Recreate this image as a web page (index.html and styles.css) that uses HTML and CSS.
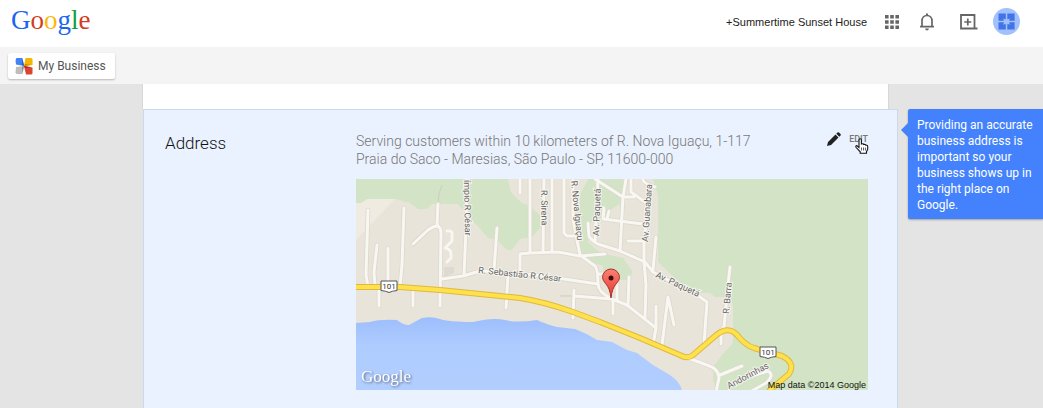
FILE: index.html
```html
<!DOCTYPE html>
<html lang="en">
<head>
    <meta charset="UTF-8">
    <meta name="viewport" content="width=device-width, initial-scale=1.0">
    <title>Google My Business</title>
    <link rel="stylesheet" href="styles.css">
</head>
<body>
    <header class="header">
        <a href="#" class="logo" aria-label="Google"><span class="blue">G</span><span class="red">o</span><span class="yellow">o</span><span class="blue">g</span><span class="green">l</span><span class="red">e</span></a>
        <nav class="tools">
            <a href="#" class="profile">+Summertime Sunset House</a>
            <button class="tool" aria-label="Apps">
                <svg width="14" height="14" viewBox="0 0 14 14" fill="#666"><path d="M0 0h3.600v3.600H0zM5.200 0h3.600v3.600H5.200zM10.400 0H14v3.600h-3.600zM0 5.200h3.600v3.600H0zM5.200 5.200h3.600v3.600H5.200zM10.400 5.200H14v3.600h-3.600zM0 10.400h3.600V14H0zM5.200 10.400h3.600V14H5.200zM10.400 10.400H14V14h-3.600z"/></svg>
            </button>
            <button class="tool" aria-label="Notifications">
                <svg width="16" height="18" viewBox="0 0 16 18"><path d="M3 13V8c0-3 2-5.500 5-5.500S13 5 13 8v5M1 13.700h14" fill="none" stroke="#666" stroke-width="1.700"/><path d="M7 0.500h2v2H7zM6 15.500h4q-.5 2-2 2t-2-2z" fill="#666"/></svg>
            </button>
            <button class="tool share" aria-label="Share">
                <svg width="18" height="16" viewBox="0 0 18 16" fill="none" stroke="#666"><path d="M1 1h13.500v13.500M1 0v14.500h16.500" stroke-width="1.800"/><path d="M7.800 4.500v7M4.300 8h7" stroke-width="1.700"/></svg>
            </button>
            <button class="avatar" aria-label="Account">
                <svg width="27" height="27" viewBox="0 0 27 27"><circle cx="13.500" cy="13.500" r="13.500" fill="#a0c1fb"/><path d="M5.500 5.500h7.300v7.300H5.500zM14.300 5.500h7.300v7.300h-7.300zM5.500 14.300h7.300v7.300H5.500zM14.300 14.300h7.300v7.300h-7.300z" fill="#4273e8"/><path d="M13.500 9l1 2.500 2.500-1-1 2.200 2 .8-2 .9 1 2.400-2.500-1-1 2.300-1-2.300-2.500 1 1-2.400-2-.9 2-.8-1-2.200 2.500 1z" fill="#a0c1fb"/></svg>
            </button>
        </nav>
    </header>

    <div class="subbar">
        <a href="#" class="business">
            <svg width="18" height="18" viewBox="0 0 18 18">
                <path d="M1.500 1h6L9 9 1 7.500Q0 2 1.500 1z" fill="#4283f4"/>
                <path d="M10.500 1H16q1.500 0 1.500 1.500V8L9 9z" fill="#f4b400"/>
                <path d="M1 10l8-1-1.500 8H2.500Q.5 17 .5 15.500z" fill="#bdbdbd"/>
                <path d="M9 9l8.500 1.500V16q0 1.500-1.500 1.500h-5z" fill="#db4430"/>
                <path d="M7.500 2L9 9 7 8z" fill="#2a56a8"/><path d="M16 8L9 9l1-2z" fill="#c68300"/><path d="M7.500 16L9 9l-2 1z" fill="#888"/><path d="M16 10.300L9 9l1 2z" fill="#9c281c"/>
            </svg>
            My Business
        </a>
    </div>

    <main class="main">
        <div class="content">
            <div class="previous"></div>
            <section class="panel">
                <h2>Address</h2>
                <div class="details">
                    <div class="summary">
                        <p>Serving customers within 10 kilometers of R. Nova Iguaçu, 1-117<br>Praia do Saco - Maresias, São Paulo - SP, 11600-000</p>
                        <button class="edit">
                            <svg width="14" height="14" viewBox="0 0 14 14" fill="#222"><path d="M0 14l1-4L8.500 2.500l3 3L4 13zM9.300 1.700L10.500.5q.8-.7 1.500 0L13.500 2q.7.700 0 1.500l-1.200 1.200z"/></svg>
                            EDIT
                            <svg class="pointer" width="14" height="16" viewBox="0 0 14 16"><path d="M4 9.500V2q0-1.300 1.200-1.300T6.400 2v4q1.800-.8 2.300.5 1.500-.5 2 .6 2-.2 2 1.600v2.500l-1.200 2.500v1.500H5.200v-1.400L1 9.300q-.7-1.500.8-1.700z" fill="#fff" stroke="#111" stroke-width="1.100"/><path d="M6.500 9.500v3M8.500 9.500v3M10.400 9.500v3" stroke="#333" stroke-width=".8"/></svg>
                        </button>
                    </div>

                    <svg class="map" viewBox="356 179 512 211" role="img" aria-label="Map">
                        <defs>
                            <linearGradient id="sea" x1="0" y1="317" x2="0" y2="390" gradientUnits="userSpaceOnUse">
                                <stop offset="0" stop-color="#9dbefd"/>
                                <stop offset=".4" stop-color="#afccff"/>
                                <stop offset="1" stop-color="#b2ceff"/>
                            </linearGradient>
                            <linearGradient id="pin" x1="0" y1="0" x2="0" y2="1">
                                <stop offset="0" stop-color="#fa8177"/>
                                <stop offset="1" stop-color="#e4372c"/>
                            </linearGradient>
                            <!-- every side street, stroked twice: outline and fill -->
                            <g id="streets">
                                <path d="M368 210L366 275L368 287M404 208L402 265L400 286M377 245L374 272L375 286M388 248V284"/>
                                <path d="M438 204L437 225Q441 228 441 232L440 306M413 244L428 230Q433 226 438 226"/>
                                <path d="M447 231H450Q453 232 452 236V241L445 248Q451 249 451 254V258L447 262" stroke-width="3"/>
                                <path d="M467 179L466 230L464 275M442 279L463 276L480 271L504 272L535 275L557 278L598 284"/>
                                <path d="M497 228L494 270M520 179V193M508 275L506 308M520 272V254L530 253L558 252L580 256L605 254"/>
                                <path d="M530 179V252M544 179L543 252M552 179V251M564 179V233L567 236H575"/>
                                <path d="M573 179V220L580 255L595 266Q598 269 598 284Q598 292 612 299L627 305L656 328L653 345"/>
                                <path d="M598 179L595 242M588 223L589 236Q591 240 598 244L620 251L645 262L653 272L697 295L707 302L704 344"/>
                                <path d="M595 179L623 197H634M626 179L623 197L620 251M631 179V192L645 202M643 179Q642 183 655 187"/>
                                <path d="M650 185L644 242V262L646 285L645 318M628 241H644M656 237L653 270M604 208L603 219L643 224M609 211L607 219"/>
                                <path d="M629 277L628 306M617 280V300M613 300V314M574 290L573 318M574 296L612 299M598 274H604"/>
                                <path d="M656 306V328M662 345L668 297L674 325M379 290V306M413 290V306"/>
                                <path d="M730 267L728 285L724 327L716 335M721 335V344M688 358L707 365Q719 369 719 378L716 392M720 375L742 366M750 392L766 383Q775 375 768 371L752 376"/>
                            </g>
                            <path id="highway" d="M356 287H400L440 290L520 298Q545 302 573 312L600 322L640 338L682 356Q688 359 693 355L714 337Q728 324 738 336Q745 345 754 348L782 356Q796 363 789 374L770 390"/>
                            <g id="shield">
                                <path d="M-8-5H8V4.500Q3 5 0 6.500-3 5-8 4.500z" fill="#fff" stroke="#555"/>
                                <text y="3" text-anchor="middle" class="route">101</text>
                            </g>
                        </defs>
                        <path d="M356 179H868V390H356z" fill="#e8e4d9"/>
                        <path d="M356 203H361L367 199H395L356 240z" fill="#efebe1"/>
                        <path d="M444 267h10v6l-10 4z" fill="#dedad0"/>
                        <!-- parks and forest -->
                        <g fill="#d2e4c5">
                            <path d="M356 179H508L511 192L522 203L528 205L540 215V228L532 237L520 239L512 250H507L497 240L488 238L458 204H432L427 209H418L410 203L395 199H367L361 203H356z"/>
                            <path d="M588 179H623V202L610 210L600 218L587 225L588 242L600 253L623 258L633 272L628 280L603 280V266L587 260L580 250V195z"/>
                            <path d="M653 179H868V390H717L713 380V367L722 355L733 343V307L730 297H715L710 293H700L680 283L658 262V195z"/>
                        </g>
                        <path d="M508 179H530V205L522 203L511 192z" fill="#e8e4d9"/>
                        <path d="M356 323L370 322Q380 319 397 320Q403 325 409 325L422 318Q432 316 440 319T473 322Q493 317 505 320T537 320Q548 325 557 327L575 329Q586 333 597 340L612 342L627 350L637 353L653 365L670 375Q680 382 682 390H356z" fill="url(#sea)"/>
                        <!-- roads -->
                        <path d="M442 185Q438 193 438 204M560 296H574" fill="none" stroke="#d0cbc2"/>
                        <g fill="none" stroke-linecap="round" stroke-linejoin="round">
                            <use href="#streets" stroke="#dcd7ce" stroke-width="4.500"/>
                            <use href="#streets" stroke="#f9f7f2" stroke-width="3"/>
                            <use href="#highway" stroke="#dfb83e" stroke-width="6"/>
                            <use href="#highway" stroke="#ffe14c" stroke-width="4"/>
                        </g>
                        <use href="#shield" x="389" y="286"/>
                        <use href="#shield" x="768" y="352"/>
                        <!-- street names -->
                        <g class="street">
                            <text transform="translate(464 180) rotate(89)">ímpio R César</text>
                            <text transform="translate(541 190) rotate(89)">R. Sirena</text>
                            <text transform="translate(571 181) rotate(84)">R. Nova Iguaçu</text>
                            <text transform="translate(599 236) rotate(-88)">Av. Paquetá</text>
                            <text transform="translate(648 242) rotate(-86)">Av. Guanabara</text>
                            <text transform="translate(478 273) rotate(6)">R. Sebastião R César</text>
                            <text transform="translate(655 277) rotate(25)">Av. Paquetá</text>
                            <text transform="translate(729 314) rotate(-85)">R. Barra</text>
                            <text transform="translate(729 389) rotate(-28)">Andorinhas</text>
                        </g>
                        <!-- marker -->
                        <path d="M611 298Q610 288 605.500 283.500Q602.500 280 602.500 277.500A8.500 8.500 0 0 1 619.500 277.500Q619.500 280 616.500 283.500Q612 288 611 298z" fill="url(#pin)" stroke="#a93229"/>
                        <circle cx="611" cy="278" r="2.500" fill="#430b08"/>
                        <text x="361" y="382" class="watermark">Google</text>
                        <text x="866" y="388" class="credit" text-anchor="end">Map data ©2014 Google</text>
                    </svg>
                </div>
            </section>
        </div>

        <aside class="tip">Providing an accurate business address is important so your business shows up in the right place on Google.</aside>
    </main>
</body>
</html>
```
FILE: styles.css
```css
body {
    margin: 0;
    min-height: 100vh;
    display: flex;
    flex-direction: column;
    font-family: Roboto, "Liberation Sans", sans-serif;
    background-color: #e4e4e4;
}
a {
    color: inherit;
    text-decoration: none;
}
button {
    padding: 0;
    border: none;
    background: none;
    font-family: inherit;
    cursor: pointer;
}
svg {
    display: block;
}
.header {
    height: 47px;
    padding: 0 23px 0 11px;
    display: flex;
    align-items: center;
    justify-content: space-between;
    background: white;
}
.logo {
    font-family: "Liberation Serif", serif;
    font-size: 27px;
    line-height: 38px;
    padding-bottom: 8px;
}
.blue {
    color: #1b66ef;
}
.red {
    color: #d43c22;
}
.yellow {
    color: #fab908;
}
.green {
    color: #109d45;
}
.tools {
    display: flex;
    align-items: center;
    gap: 18px;
    padding-bottom: 4px;
}
.profile {
    font-family: "Liberation Sans", Arial, sans-serif;
    font-size: 11px;
    color: #222;
}
.tool + .tool {
    margin-left: 2px;
}
.tool + .share {
    margin-left: 7px;
}
.avatar {
    margin-left: -3px;
}
.subbar {
    height: 37px;
    padding: 0 8px;
    display: flex;
    align-items: center;
    background: #f4f4f4;
}
.business {
    height: 26px;
    padding: 0 9px 0 7px;
    display: flex;
    align-items: center;
    gap: 5px;
    font-size: 12px;
    color: #555;
    background: white;
    border-radius: 2px;
    box-shadow: 0 1px 2px rgba(0,0,0,0.25);
}
.main {
    flex: 1;
    display: grid;
    grid-template-columns: minmax(0, 1fr) 135px;
    column-gap: 10px;
    margin-left: 143px;
}
.content {
    display: flex;
    flex-direction: column;
}
.previous {
    height: 25px;
    margin-right: 10px;
    background: white;
    box-shadow: 0 0 1px rgba(0,0,0,0.3);
    clip-path: inset(0 -1px);
}
.panel {
    flex: 1;
    display: grid;
    grid-template-columns: 191px minmax(0, 1fr);
    padding: 22px 29px 18px 21px;
    background: #eaf2ff;
    border: 1px solid #c9d9ee;
    border-bottom: none;
}
h2 {
    margin: 0;
    font-size: 17px;
    line-height: 22px;
    font-weight: 300;
    color: #111;
}
.summary {
    display: flex;
    justify-content: space-between;
    align-items: flex-start;
    margin-bottom: 11px;
}
.summary p {
    margin: 0;
    font-size: 14px;
    line-height: 18px;
    font-weight: 300;
    color: #777;
}
.edit {
    position: relative;
    display: flex;
    align-items: center;
    gap: 8px;
    font-size: 9px;
    font-weight: 500;
    color: #777;
}
.pointer {
    position: absolute;
    left: 28px;
    top: 6px;
}
.map {
    width: 100%;
}
.street {
    font-size: 9px;
    fill: #666;
    stroke: #f7f5ef;
    stroke-width: 2px;
    paint-order: stroke;
}
.route {
    font-size: 8px;
    fill: #333;
}
.watermark {
    font-family: "Liberation Serif", serif;
    font-size: 17px;
    fill: white;
    filter: drop-shadow(1px 1px 1px rgba(0,0,0,0.5));
}
.credit {
    font-family: "Liberation Sans", Arial, sans-serif;
    font-size: 9px;
    fill: #111;
}
.tip {
    position: relative;
    align-self: start;
    margin-top: 25px;
    padding: 8px 9px 6px;
    font-size: 12px;
    line-height: 16px;
    color: white;
    background: #4382fc;
    border-radius: 2px 0 0 2px;
    box-shadow: 0 1px 2px rgba(0,0,0,0.3);
}
.tip::before {
    content: "";
    position: absolute;
    left: -7px;
    top: 14px;
    border: 7px solid transparent;
    border-left: none;
    border-right-color: #4382fc;
}
```
